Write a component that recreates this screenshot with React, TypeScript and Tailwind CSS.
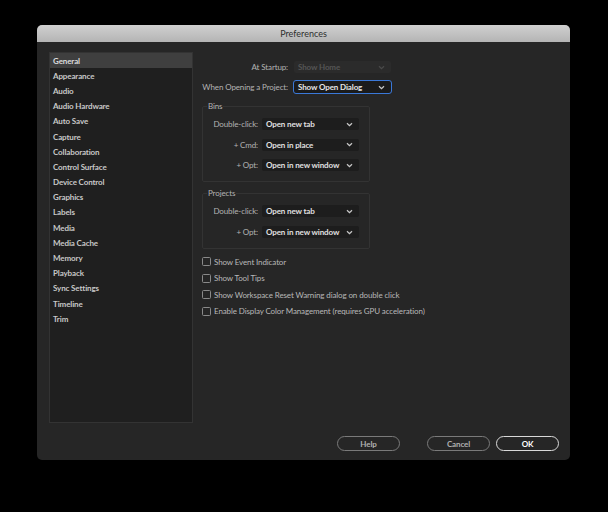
import React from "react";

const SECTIONS = [
  "General",
  "Appearance",
  "Audio",
  "Audio Hardware",
  "Auto Save",
  "Capture",
  "Collaboration",
  "Control Surface",
  "Device Control",
  "Graphics",
  "Labels",
  "Media",
  "Media Cache",
  "Memory",
  "Playback",
  "Sync Settings",
  "Timeline",
  "Trim",
];

const FONT = { fontFamily: "Lato, 'Open Sans', sans-serif" };

function Chevron({ dim }: { dim?: boolean }) {
  return (
    <svg width="7" height="5" viewBox="0 0 7 5" className="shrink-0">
      <path
        d="M1 1.2 L3.5 3.6 L6 1.2"
        fill="none"
        stroke={dim ? "#4a4a4a" : "#c8c8c8"}
        strokeWidth="1.3"
      />
    </svg>
  );
}

function Select({
  value,
  focused,
  disabled,
}: {
  value: string;
  focused?: boolean;
  disabled?: boolean;
}) {
  return (
    <div
      className={[
        "flex h-[12px] w-[97px] shrink-0 items-center justify-between rounded-[2px] pl-[4px] pr-[6px] text-[8px] leading-none",
        disabled
          ? "bg-[#2b2b2b] text-[#555555]"
          : focused
          ? "bg-[#1b1b1b] text-[#e6e6e6] outline outline-[1px] outline-[#3a78d8]"
          : "bg-[#1d1d1d] text-[#e0e0e0]",
      ].join(" ")}
    >
      <span className="whitespace-nowrap font-bold">{value}</span>
      <Chevron dim={disabled} />
    </div>
  );
}

function Row({ label, value }: { label: string; value: string }) {
  return (
    <div className="flex items-center gap-[4px]">
      <span className="w-[55px] whitespace-nowrap text-right text-[8px] leading-none text-[#b4b4b4]">{label}</span>
      <Select value={value} />
    </div>
  );
}

function Group({ title, children, h }: { title: string; children: React.ReactNode; h: string }) {
  return (
    <div className={`relative w-[168px] ${h} rounded-[2px] border border-[#333333]`}>
      <span className="absolute left-[4px] top-[-6px] bg-[#262626] px-[1px] text-[8px] leading-[11px] text-[#b4b4b4]">
        {title}
      </span>
      {children}
    </div>
  );
}

function Check({ label }: { label: string }) {
  return (
    <div className="flex h-[16.5px] items-center gap-[3px]">
      <span className="h-[9px] w-[9px] rounded-[1.5px] border border-[#8a8a8a]" />
      <span className="whitespace-nowrap text-[8px] leading-none text-[#b8b8b8]">{label}</span>
    </div>
  );
}

function Btn({ label, primary }: { label: string; primary?: boolean }) {
  return (
    <div
      className={[
        "flex h-[15px] w-[63px] items-center justify-center rounded-full border-[1.5px] text-[8px] font-bold leading-none",
        primary ? "border-[#d8d8d8] text-white" : "border-[#7a7a7a] text-[#b0b0b0]",
      ].join(" ")}
    >
      {label}
    </div>
  );
}

export default function App() {
  return (
    <div
      className="h-[512px] w-[608px] overflow-hidden bg-black pl-[37px] pt-[25px] tracking-[-0.12px]"
      style={FONT}
    >
      <div className="flex h-[435px] w-[533px] flex-col overflow-hidden rounded-[5px] bg-[#262626]">
        {/* Title bar */}
        <div className="flex h-[17px] shrink-0 items-center justify-center bg-gradient-to-b from-[#d0d0d0] to-[#b4b4b4] text-[9px] leading-none tracking-normal text-[#2e2e2e]">
          Preferences
        </div>

        <div className="flex flex-1 px-[12px] pt-[10px]">
          {/* Sidebar */}
          <div className="flex h-[371px] w-[144px] shrink-0 flex-col border border-[#333333] bg-[#1f1f1f]">
            {SECTIONS.map((s, i) => (
              <div
                key={s}
                className={[
                  "flex h-[15.2px] items-center px-[3px] text-[8px] font-bold leading-none",
                  i === 0 ? "bg-[#3f3f3f] text-[#dcdcdc]" : "text-[#c8c8c8]",
                ].join(" ")}
              >
                {s}
              </div>
            ))}
          </div>

          {/* Main */}
          <div className="flex flex-1 flex-col pl-[9px]">
            <div className="flex flex-col gap-[8px] pt-[9px]">
              <div className="flex items-center gap-[6px]">
                <span className="w-[86px] whitespace-nowrap text-right text-[8px] leading-none text-[#b4b4b4]">
                  At Startup:
                </span>
                <Select value="Show Home" disabled />
              </div>
              <div className="flex items-center gap-[6px]">
                <span className="w-[86px] whitespace-nowrap text-right text-[8px] leading-none text-[#b4b4b4]">
                  When Opening a Project:
                </span>
                <Select value="Show Open Dialog" focused />
              </div>
            </div>

            <div className="mt-[13px]">
              <Group title="Bins" h="h-[76px]">
                <div className="flex flex-col gap-[8.5px] pt-[11px]">
                  <Row label="Double-click:" value="Open new tab" />
                  <Row label="+ Cmd:" value="Open in place" />
                  <Row label="+ Opt:" value="Open in new window" />
                </div>
              </Group>
            </div>

            <div className="mt-[11px]">
              <Group title="Projects" h="h-[56px]">
                <div className="flex flex-col gap-[9px] pt-[11px]">
                  <Row label="Double-click:" value="Open new tab" />
                  <Row label="+ Opt:" value="Open in new window" />
                </div>
              </Group>
            </div>

            <div className="mt-[4.5px] flex flex-col">
              <Check label="Show Event Indicator" />
              <Check label="Show Tool Tips" />
              <Check label="Show Workspace Reset Warning dialog on double click" />
              <Check label="Enable Display Color Management (requires GPU acceleration)" />
            </div>
          </div>
        </div>

        {/* Footer buttons */}
        <div className="flex h-[24px] shrink-0 items-start justify-end pr-[11px]">
          <Btn label="Help" />
          <div className="w-[27px]" />
          <Btn label="Cancel" />
          <div className="w-[6px]" />
          <Btn label="OK" primary />
        </div>
      </div>
    </div>
  );
}
